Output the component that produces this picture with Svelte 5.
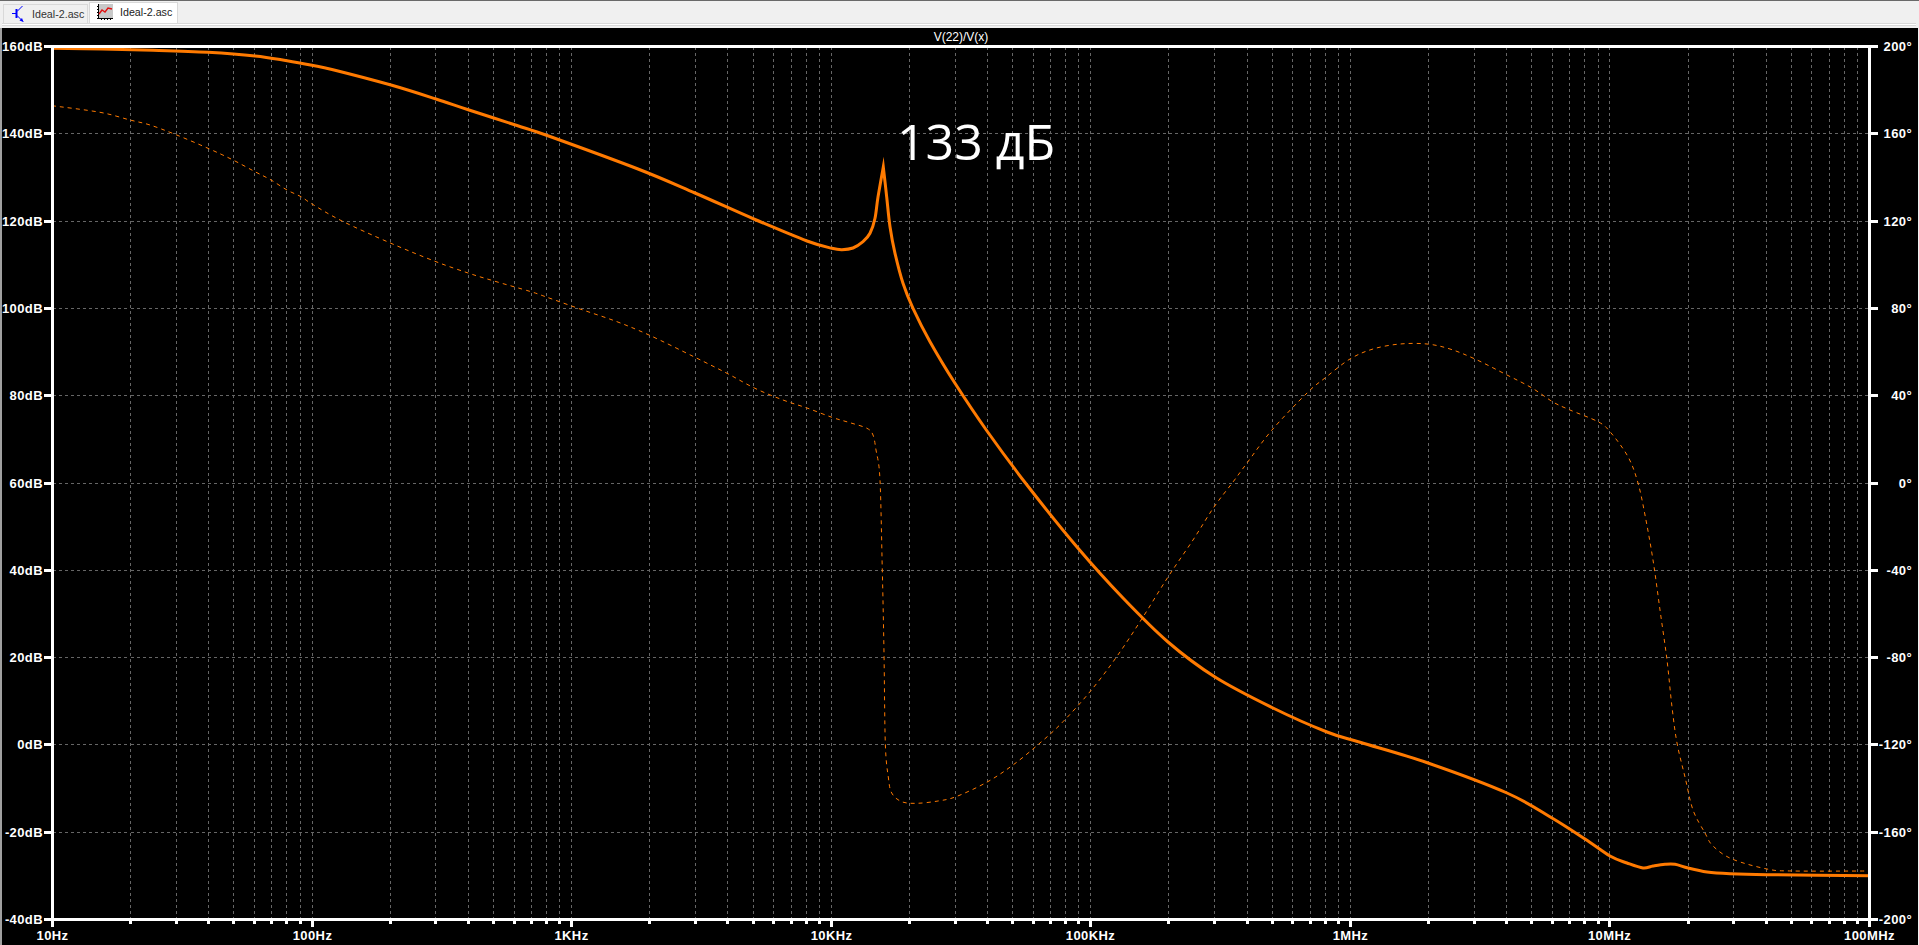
<script lang="ts">
  // Bode plot window: tab strip on top, waveform pane below
  const plot = { left: 52.5, right: 1869.5, top: 46.5, bottom: 919.5 };
  const decades = 7;
  const decadeWidth = (plot.right - plot.left) / decades;
  const rowHeight = (plot.bottom - plot.top) / 10;

  const rows = Array.from({ length: 11 }, (_, i) => ({
    y: Math.floor(plot.top + i * rowHeight) + 0.5,
    db: `${160 - i * 20}dB`,
    deg: `${200 - i * 40}°`,
  }));

  const freqLabels = ['10Hz', '100Hz', '1KHz', '10KHz', '100KHz', '1MHz', '10MHz', '100MHz'];
  const majors = freqLabels.map((label, i) => ({
    label,
    x: Math.floor(plot.left + i * decadeWidth) + 0.5,
  }));

  const verticals: number[] = [];
  for (let d = 0; d < decades; d++) {
    for (let m = 1; m <= 10; m++) {
      if (d === decades - 1 && m === 10) continue;
      verticals.push(Math.floor(plot.left + (d + Math.log10(m)) * decadeWidth) + 0.5);
    }
  }

  // traced from the reference, in page pixels
  const magnitudeRise = [
    [52, 48.3], [102, 49], [153, 50.3], [208, 52.3], [255, 56], [287, 60.7], [312, 65.3], [333, 69.7],
    [391, 85], [436, 99], [469, 110], [517, 125.5], [550, 136.5], [638, 169], [695, 193], [755, 219.5],
    [807, 241], [832, 248.3], [842, 249.7], [853, 248], [863, 241.7], [870, 233.3], [875, 218.3],
    [878, 197], [883.3, 167],
  ];
  const magnitudeFall = [
    [883.3, 167], [886.7, 197], [890, 226.7], [895, 253.3], [903, 283.3], [913, 308.3], [930, 341.7],
    [955, 383.3], [987, 431], [1027, 485], [1077, 547], [1123, 598], [1168, 642], [1215, 677],
    [1273, 708], [1327, 732], [1360, 742.3], [1428, 763], [1507, 793], [1552, 818], [1585, 839],
    [1610, 856], [1627, 863], [1643, 868], [1653, 866], [1665, 864.3], [1675, 864.3], [1688, 868],
    [1707, 872], [1730, 873.7], [1767, 874.7], [1870, 875.7],
  ];

  const phase = [
    [52, 105.7], [100, 112.3], [130, 120], [150, 125], [175, 134.3], [208, 148.3], [233, 160],
    [255, 171.7], [271, 180], [287, 190], [301, 196.7], [312, 204], [342, 221], [391, 243.3],
    [436, 261.7], [469, 273.3], [493, 280.7], [531, 291.7], [550, 298.3], [583, 310], [617, 321.7],
    [649, 335], [695, 357.3], [727, 373.3], [755, 388.3], [783, 400], [807, 408], [832, 417.3],
    [850, 422.7], [867, 428.3], [873, 435], [876, 450], [880, 480], [882.3, 570], [884, 653],
    [885.3, 743], [888.3, 777], [891.7, 793], [901.7, 801.7], [916.7, 803.3], [938, 801], [956, 796.7],
    [986.7, 782.3], [1013, 765], [1040, 743], [1063, 721.7], [1090, 691.7], [1116.7, 656.7],
    [1143, 617], [1168, 577], [1193, 540], [1214, 507], [1233, 482], [1247, 463], [1272, 430],
    [1307, 393], [1325, 378], [1350, 359], [1373, 349], [1400, 344], [1427, 344], [1450, 349],
    [1475, 359], [1507, 375], [1532, 388], [1553, 402], [1570, 410], [1598, 421.7], [1610, 431.7],
    [1628, 456.7], [1638, 483], [1645, 515], [1653, 560], [1660, 610], [1667, 660], [1672, 707],
    [1677, 743], [1685, 777], [1693, 810], [1705, 833], [1713, 846], [1732, 859], [1767, 869],
    [1793, 871], [1868, 871],
  ];

  // Catmull-Rom through the traced points so the traces don't look polygonal
  function curveThrough(pts: number[][]): string {
    let d = '';
    for (let i = 0; i < pts.length - 1; i++) {
      const p0 = pts[i - 1] ?? pts[i];
      const p1 = pts[i];
      const p2 = pts[i + 1];
      const p3 = pts[i + 2] ?? p2;
      const c1x = p1[0] + (p2[0] - p0[0]) / 6;
      const c1y = p1[1] + (p2[1] - p0[1]) / 6;
      const c2x = p2[0] - (p3[0] - p1[0]) / 6;
      const c2y = p2[1] - (p3[1] - p1[1]) / 6;
      d += `C${c1x.toFixed(1)} ${c1y.toFixed(1)} ${c2x.toFixed(1)} ${c2y.toFixed(1)} ${p2[0]} ${p2[1]}`;
    }
    return d;
  }

  const start = (pts: number[][]) => `M${pts[0][0]} ${pts[0][1]}`;
  const magnitudePath = start(magnitudeRise) + curveThrough(magnitudeRise) + curveThrough(magnitudeFall);
  const phasePath = start(phase) + curveThrough(phase);
</script>

<div class="window">
  <div class="tabstrip">
    <div class="tabs">
      <div class="tab">
        <svg class="icon-schematic" width="14" height="18" viewBox="0 0 14 18" fill="none" stroke="#0000ff">
          <path d="M0 8.5H4" />
          <path d="M4.5 4V13" stroke-width="2" />
          <path d="M5 6.5L10.5 1" />
          <path d="M5 10.5L11 16.5" />
          <path d="M7.5 15.5L11.5 17L10 13Z" fill="#0000ff" stroke="none" />
        </svg>
        <span>Ideal-2.asc</span>
      </div>
      <div class="tab tab--active">
        <svg class="icon-plot" width="16" height="16" viewBox="0 0 16 16" fill="none">
          <rect x="1" y="0" width="15" height="14" fill="#c8c8c8" />
          <path d="M1.5 0V15M0 14.5H16" stroke="#000" />
          <path d="M0 2.5H1M0 5.5H1M0 8.5H1M0 11.5H1M4.5 15V16M7.5 15V16M10.5 15V16M13.5 15V16" stroke="#000" />
          <path d="M2 10L5 6L8 8L11 4L15 5" stroke="#e01010" stroke-width="1.4" />
        </svg>
        <span>Ideal-2.asc</span>
      </div>
    </div>
    <div class="tabs-rule"></div>
  </div>

  <div class="pane">
    <svg class="plot" width="1916" height="917" viewBox="2 28 1916 917">
      <g class="grid">
        {#each verticals as x}
          <line x1={x} x2={x} y1={plot.top} y2={plot.bottom} />
        {/each}
        {#each rows.slice(1, -1) as row}
          <line x1={plot.left} x2={plot.right} y1={row.y} y2={row.y} />
        {/each}
      </g>

      <path class="trace-phase" d={phasePath} />
      <path class="trace-mag" d={magnitudePath} />

      <g class="axes">
        <rect x="51" y="45" width="3" height="876" />
        <rect x="1868" y="45" width="3" height="876" />
        {#each rows as row}
          <rect x="44" y={row.y - 1.5} width="8" height="3" />
          <rect x="1870" y={row.y - 1.5} width="8" height="3" />
        {/each}
        <rect x="51" y="45" width="1820" height="3" />
        <rect x="51" y="918" width="1820" height="3" />
        {#each verticals as x}
          <rect x={x - 1.5} y="920" width="3" height="4" />
        {/each}
        {#each majors as m}
          <rect x={m.x - 1.5} y="920" width="3" height="7" />
        {/each}
      </g>

      <g class="labels">
        <text class="title" x="961" y="41">V(22)/V(x)</text>
        {#each rows as row}
          <text class="left" x="43" y={row.y + 4.5}>{row.db}</text>
          <text class="right" x="1912" y={row.y + 4.5}>{row.deg}</text>
        {/each}
        {#each majors as m}
          <text class="bottom" x={m.x} y="940">{m.label}</text>
        {/each}
      </g>

      <text class="note" x="897" y="160">133 дБ</text>
    </svg>
  </div>
</div>

<style>
  :global(body) {
    margin: 0;
    background: #f0f0f0;
    overflow: hidden;
  }

  .window {
    display: flex;
    flex-direction: column;
    width: 1919px;
    height: 945px;
    overflow: hidden;
  }

  .tabstrip {
    display: flex;
    flex-direction: column;
    height: 28px;
    flex: none;
    box-sizing: border-box;
    border-top: 1px solid #696969;
    padding: 1px 3px 0 2px;
    background: #f0f0f0;
  }

  .tabs {
    display: flex;
    align-items: flex-end;
    height: 21px;
    padding-left: 1px;
  }

  .tab {
    display: flex;
    align-items: center;
    box-sizing: border-box;
    width: 85px;
    height: 19px;
    padding-left: 8px;
    gap: 6px;
    font: 10.7px "Liberation Sans", Arial, sans-serif;
    white-space: nowrap;
    color: #333;
    background: #f0f0f0;
    border: 1px solid #d9d9d9;
    border-bottom: none;
  }

  .tab--active {
    width: 89px;
    height: 21px;
    margin-left: 1px;
    padding-left: 7px;
    gap: 7px;
    background: #fff;
    color: #222;
  }

  .icon-schematic,
  .icon-plot {
    flex: none;
    overflow: visible;
  }

  .icon-plot {
    margin-top: -3px;
  }

  .tab--active span {
    margin-top: -2px;
  }

  .tabs-rule {
    height: 1px;
    box-sizing: content-box;
    background: #fff;
    border-top: 1px solid #d9d9d9;
    border-bottom: 1px solid #d9d9d9;
  }

  .pane {
    flex: 1;
    border-left: 2px solid #a0a0a0;
    border-right: 1px solid #f0f0f0;
    background: #000;
    min-height: 0;
  }

  .plot {
    display: block;
  }

  .grid line {
    stroke: #666;
    stroke-width: 1;
    stroke-dasharray: 3 3;
    shape-rendering: crispEdges;
  }

  .axes rect {
    fill: #fff;
    shape-rendering: crispEdges;
  }

  .trace-mag,
  .trace-phase {
    fill: none;
    stroke: #ff7a00;
  }

  .trace-mag {
    stroke-width: 3;
    stroke-linejoin: miter;
    stroke-miterlimit: 20;
  }

  .trace-phase {
    stroke-width: 1;
    stroke-dasharray: 4 4;
  }

  .labels text {
    fill: #fff;
    font: bold 13px "Liberation Sans", Arial, sans-serif;
    letter-spacing: 0.4px;
  }

  .left,
  .right {
    text-anchor: end;
  }

  .bottom,
  .title {
    text-anchor: middle;
  }

  .labels .title {
    font-weight: normal;
    font-size: 12px;
    letter-spacing: 0;
  }

  .note {
    fill: #fff;
    font: 50px "Open Sans", sans-serif;
  }
</style>
